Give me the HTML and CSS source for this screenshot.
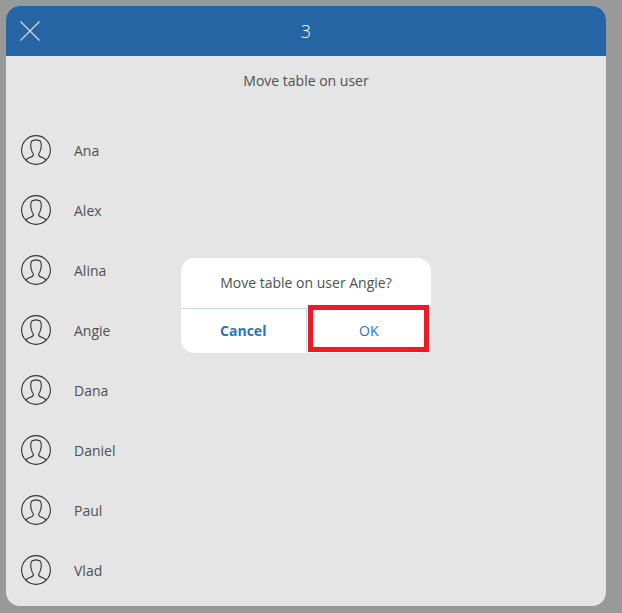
FILE: index.html
```html
<!DOCTYPE html>
<html lang="en">
<head>
    <meta charset="UTF-8">
    <title>Move table</title>
    <link rel="stylesheet" href="styles.css">
</head>
<body>
    <svg class="defs" width="0" height="0">
        <symbol id="user" viewBox="0 0 30 30">
            <circle cx="15" cy="15" r="14.4"/>
            <path d="M4.8 25.6 C5.4 23.6 7.4 23 9.6 22.3 C11.6 21.6 12.6 20.8 12.4 19 C11.2 17.6 10.6 15.8 10.4 14.2 C9.8 13.6 9.6 12.4 10 11.6 C9.4 9.6 9.6 5.6 12.4 5.4 C13.6 4.9 16.4 4.9 17.6 5.4 C20.4 5.6 20.6 9.6 20 11.6 C20.4 12.4 20.2 13.6 19.6 14.2 C19.4 15.8 18.8 17.6 17.6 19 C17.4 20.8 18.4 21.6 20.4 22.3 C22.6 23 24.6 23.6 25.2 25.6"/>
        </symbol>
    </svg>
    <div class="panel">
        <div class="header">
            <svg class="close" viewBox="0 0 20 20"><path d="M0.5 0.5 L19.5 19.5 M19.5 0.5 L0.5 19.5"/></svg>
            <span>3</span>
        </div>
        <div class="subtitle">Move table on user</div>
        <ul class="users">
            <li><svg class="avatar"><use href="#user"/></svg>Ana</li>
            <li><svg class="avatar"><use href="#user"/></svg>Alex</li>
            <li><svg class="avatar"><use href="#user"/></svg>Alina</li>
            <li><svg class="avatar"><use href="#user"/></svg>Angie</li>
            <li><svg class="avatar"><use href="#user"/></svg>Dana</li>
            <li><svg class="avatar"><use href="#user"/></svg>Daniel</li>
            <li><svg class="avatar"><use href="#user"/></svg>Paul</li>
            <li><svg class="avatar"><use href="#user"/></svg>Vlad</li>
        </ul>
    </div>
    <div class="dialog">
        <div class="dialog-text">Move table on user Angie?</div>
        <div class="dialog-buttons">
            <button class="cancel">Cancel</button>
            <button class="ok">OK</button>
        </div>
    </div>
    <div class="highlight"></div>
</body>
</html>
```

FILE: styles.css
```css
html, body {
    margin: 0;
    height: 100%;
}
body {
    background-color: #999999;
    padding: 6px;
    box-sizing: border-box;
    font-family: "Open Sans", sans-serif;
    font-size: 14px;
    color: #505050;
    overflow: hidden;
}
.defs {
    position: absolute;
}
.panel {
    width: 600px;
    height: 600px;
    background-color: #e5e5e5;
    border-radius: 14px;
    overflow: hidden;
}
.header {
    height: 50px;
    background-color: #2565a3;
    color: white;
    font-size: 18px;
    font-weight: 300;
    display: flex;
    align-items: center;
    justify-content: center;
    position: relative;
}
.close {
    position: absolute;
    left: 14px;
    top: 15px;
    width: 20px;
    height: 20px;
    fill: none;
    stroke: #d5e0ec;
    stroke-width: 1.1;
}
.subtitle {
    height: 49px;
    display: flex;
    align-items: center;
    justify-content: center;
}
.users {
    list-style: none;
    margin: 0;
    padding: 15px 0 0 15px;
}
.users li {
    height: 60px;
    display: flex;
    align-items: center;
}
.avatar {
    width: 30px;
    height: 30px;
    margin-right: 23px;
    fill: none;
    stroke: #333333;
    stroke-width: 1.1;
}
.dialog {
    position: absolute;
    left: 181px;
    top: 258px;
    width: 250px;
    height: 95px;
    background-color: white;
    border-radius: 14px;
    display: flex;
    flex-direction: column;
}
.dialog-text {
    height: 51px;
    padding-bottom: 2px;
    display: flex;
    align-items: center;
    justify-content: center;
    border-bottom: 1px solid #c9dbe8;
    box-sizing: border-box;
}
.dialog-buttons {
    flex: 1;
    display: flex;
}
.dialog-buttons button {
    flex: 1;
    border: none;
    background: none;
    padding: 0 0 2px;
    font-family: inherit;
    font-size: 14px;
    color: #2f73b7;
}
.cancel {
    font-weight: 700;
    border-right: 1px solid #c9dbe8 !important;
}
.highlight {
    position: absolute;
    left: 308px;
    top: 305px;
    width: 121px;
    height: 47px;
    border: 5px solid #ed1c24;
    box-sizing: border-box;
}
```
